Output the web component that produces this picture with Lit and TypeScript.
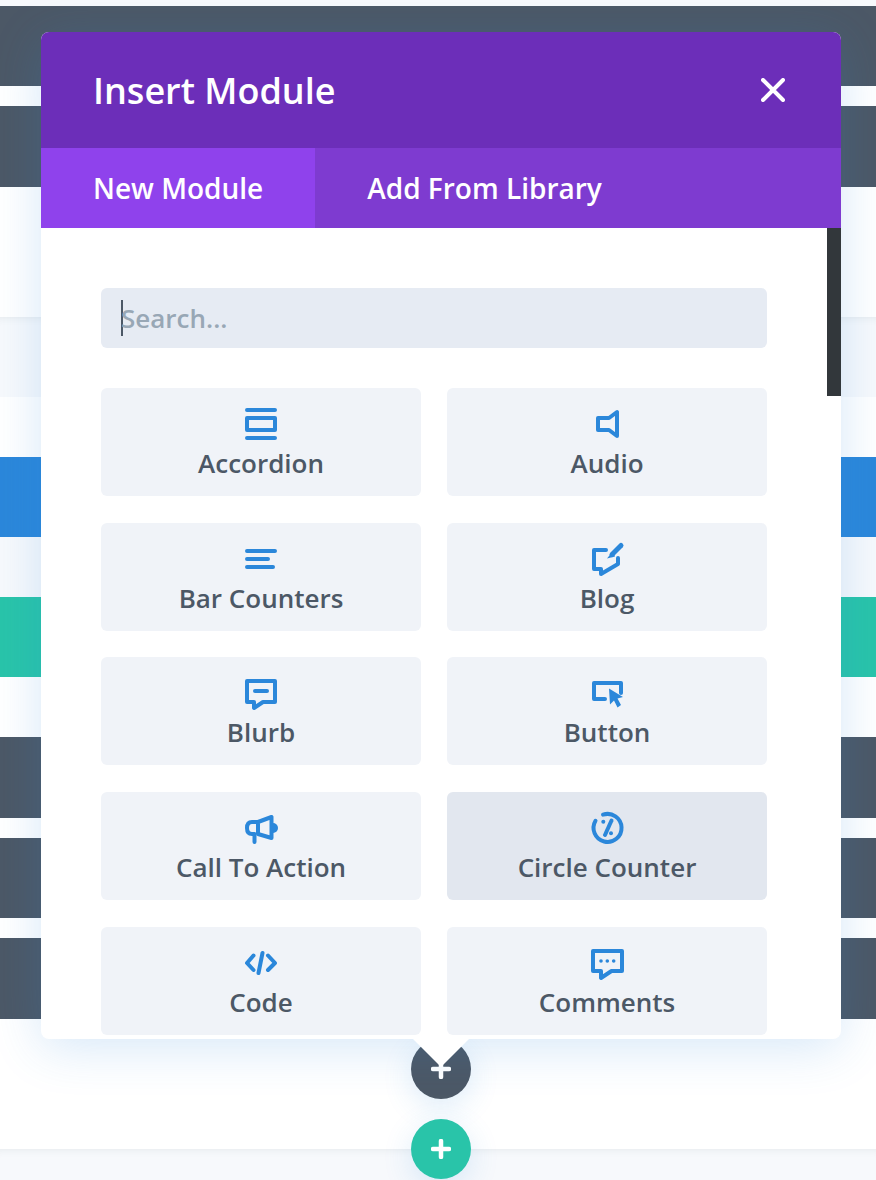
import { LitElement, html, svg, css } from 'lit';
import { customElement } from 'lit/decorators.js';

// background strips of the page behind the modal
const STRIPS = [
  ['light', 6],
  ['dark', 80],
  ['white', 20],
  ['dark', 81],
  ['white', 130],
  ['light shade', 80],
  ['white', 60],
  ['blue', 80],
  ['light', 60],
  ['green', 80],
  ['white', 60],
  ['dark', 81],
  ['white', 20],
  ['dark', 80],
  ['white', 20],
  ['dark', 81],
  ['white', 130],
  ['light shade', 31],
] as const;

const MODULES = [
  {
    name: 'Accordion',
    icon: svg`<path d="M4 4H32M4 32H32"/><rect x="4" y="12" width="28" height="12"/>`,
  },
  { name: 'Audio', icon: svg`<path d="M9 12H20L28 6V30L20 24H9Z"/>` },
  { name: 'Bar Counters', icon: svg`<path d="M4 10H32M4 18H25M4 26H30"/>` },
  {
    name: 'Blog',
    icon: svg`<path d="M17 9H5V28H12V33L29 23V17"/><path stroke-width="5" d="M32 4.500L23 13.500"/><path class="fill" d="M24 10L26 15.500L18 17.500Z"/>`,
  },
  { name: 'Blurb', icon: svg`<path d="M4 6H32V27H20L11 33V27H4Z"/><path d="M12 16H24"/>` },
  {
    name: 'Button',
    icon: svg`<path d="M16 24H5V8H32V18"/><path class="fill" stroke-width="1" d="M20 13.500L34 22L28.500 23.500L32 30L28.500 32.500L25 25.500L21 29.500Z"/>`,
  },
  {
    name: 'Call To Action',
    icon: svg`<path d="M15 12H9C5 12 4 15 4 18C4 21 5 24 9 24H11.500V32"/><path d="M15 12L28.500 7V28L15 24Z"/><path class="fill" d="M30 13a5 5 0 0 1 0 10Z"/>`,
  },
  {
    name: 'Circle Counter',
    active: true,
    icon: svg`<path d="M14 4.700A14 14 0 1 1 6.500 10.800"/><path d="M22.500 10.500L16 25"/><circle class="fill" cx="14.300" cy="11.700" r="2"/><circle class="fill" cx="22" cy="23.300" r="2"/>`,
  },
  { name: 'Code', icon: svg`<path d="M10.500 10.500L4 18L10.500 25M19.500 8L15.500 28M25 10.500L32 18L25 25"/>` },
  {
    name: 'Comments',
    icon: svg`<path d="M4 6H33V26H22.500L12 33V26H4Z"/><circle class="fill" cx="12" cy="16" r="1.800"/><circle class="fill" cx="18.300" cy="16" r="1.800"/><circle class="fill" cx="24.700" cy="16" r="1.800"/>`,
  },
];

const PLUS = html`<svg width="20" height="20" viewBox="0 0 20 20">
  <path d="M2 10H18M10 2V18" stroke="#fff" stroke-width="4.500" stroke-linecap="round" fill="none" />
</svg>`;

@customElement('app-root')
export class AppRoot extends LitElement {
  static styles = css`
    :host {
      display: block;
      position: relative;
      width: 876px;
      height: 1180px;
      overflow: hidden;
      background: #fff;
      font-family: 'Open Sans', 'Noto Sans', sans-serif;
    }
    .strip.white { background: #fff; }
    .strip.light { background: #f7f9fc; }
    .strip.shade { box-shadow: inset 0 8px 8px -8px rgba(76, 88, 102, 0.12); }
    .strip.dark { background: #4c5866; }
    .strip.blue { background: #2b87da; }
    .strip.green { background: #29c4a9; }

    .round {
      position: absolute;
      left: 411px;
      width: 60px;
      height: 60px;
      border-radius: 50%;
      display: flex;
      align-items: center;
      justify-content: center;
      box-shadow: 0 8px 30px rgba(43, 135, 218, 0.16);
    }
    .round.add-row { top: 1039px; background: #4c5866; }
    .round.add-section { top: 1119px; background: #29c4a9; }
    .round svg { display: block; }

    .modal {
      position: absolute;
      left: 41px;
      top: 32px;
      width: 800px;
      height: 1007px;
      display: flex;
      flex-direction: column;
      background: #fff;
      border-radius: 8px;
      box-shadow: 0 8px 50px rgba(43, 135, 218, 0.2);
    }
    .modal::after {
      content: '';
      position: absolute;
      left: 372px;
      top: 100%;
      border-top: 28px solid #fff;
      border-left: 28px solid transparent;
      border-right: 28px solid transparent;
    }
    .head {
      height: 116px;
      flex: none;
      display: flex;
      align-items: center;
      justify-content: space-between;
      padding: 0 56px 0 52px;
      background: #6c2eb9;
      border-radius: 8px 8px 0 0;
      color: #fff;
      font-size: 36px;
      font-weight: 600;
    }
    .head svg { display: block; }
    .tabs {
      height: 80px;
      flex: none;
      display: flex;
      background: #7e3bd0;
      color: #fff;
      font-size: 28px;
      font-weight: 600;
    }
    .tab {
      display: flex;
      align-items: center;
      padding: 0 52px;
    }
    .tab.on { background: #8f42ec; }
    .body {
      position: relative;
      flex: 1;
      min-height: 0;
      overflow: hidden;
      padding: 60px 74px 0 60px;
      border-radius: 0 0 8px 8px;
    }
    .thumb {
      position: absolute;
      right: 0;
      top: 0;
      width: 14px;
      height: 168px;
      background: #32373b;
    }
    .search {
      height: 60px;
      display: flex;
      align-items: center;
      padding-left: 20px;
      margin-bottom: 40px;
      background: #e6ebf3;
      border-radius: 6px;
      color: #98a7b5;
      font-size: 26px;
      font-weight: 600;
    }
    .caret {
      width: 2px;
      height: 36px;
      margin-right: -2px;
      background: #4c5866;
    }
    .grid {
      display: grid;
      grid-template-columns: 320px 320px;
      grid-auto-rows: 108px;
      column-gap: 26px;
      row-gap: 26.660px;
    }
    .card {
      display: flex;
      flex-direction: column;
      align-items: center;
      padding-top: 18px;
      box-sizing: border-box;
      background: #f0f3f8;
      border-radius: 6px;
      color: #4c5866;
      font-size: 26px;
      font-weight: 600;
      line-height: 36px;
    }
    .card.active { background: #e2e7ef; }
    .card svg {
      display: block;
      flex: none;
      fill: none;
      stroke: #2b87da;
      stroke-width: 4;
      stroke-linecap: round;
      stroke-linejoin: round;
    }
    .card svg .fill { fill: #2b87da; stroke: none; }
    .card span { margin-top: 3px; }
  `;

  render() {
    return html`
      ${STRIPS.map(([kind, h]) => html`<div class="strip ${kind}" style="height:${h}px"></div>`)}
      <div class="round add-row">${PLUS}</div>
      <div class="round add-section">${PLUS}</div>
      <div class="modal">
        <div class="head">
          <div>Insert Module</div>
          <svg width="24" height="24" viewBox="0 0 24 24">
            <path d="M2 2L22 22M22 2L2 22" stroke="#fff" stroke-width="4" stroke-linecap="round" fill="none" />
          </svg>
        </div>
        <div class="tabs">
          <div class="tab on">New Module</div>
          <div class="tab">Add From Library</div>
        </div>
        <div class="body">
          <div class="thumb"></div>
          <div class="search"><div class="caret"></div>Search...</div>
          <div class="grid">
            ${MODULES.map(
              (m) => html`<div class="card ${m.active ? 'active' : ''}">
                <svg width="36" height="36" viewBox="0 0 36 36">${m.icon}</svg>
                <span>${m.name}</span>
              </div>`
            )}
          </div>
        </div>
      </div>
    `;
  }
}
